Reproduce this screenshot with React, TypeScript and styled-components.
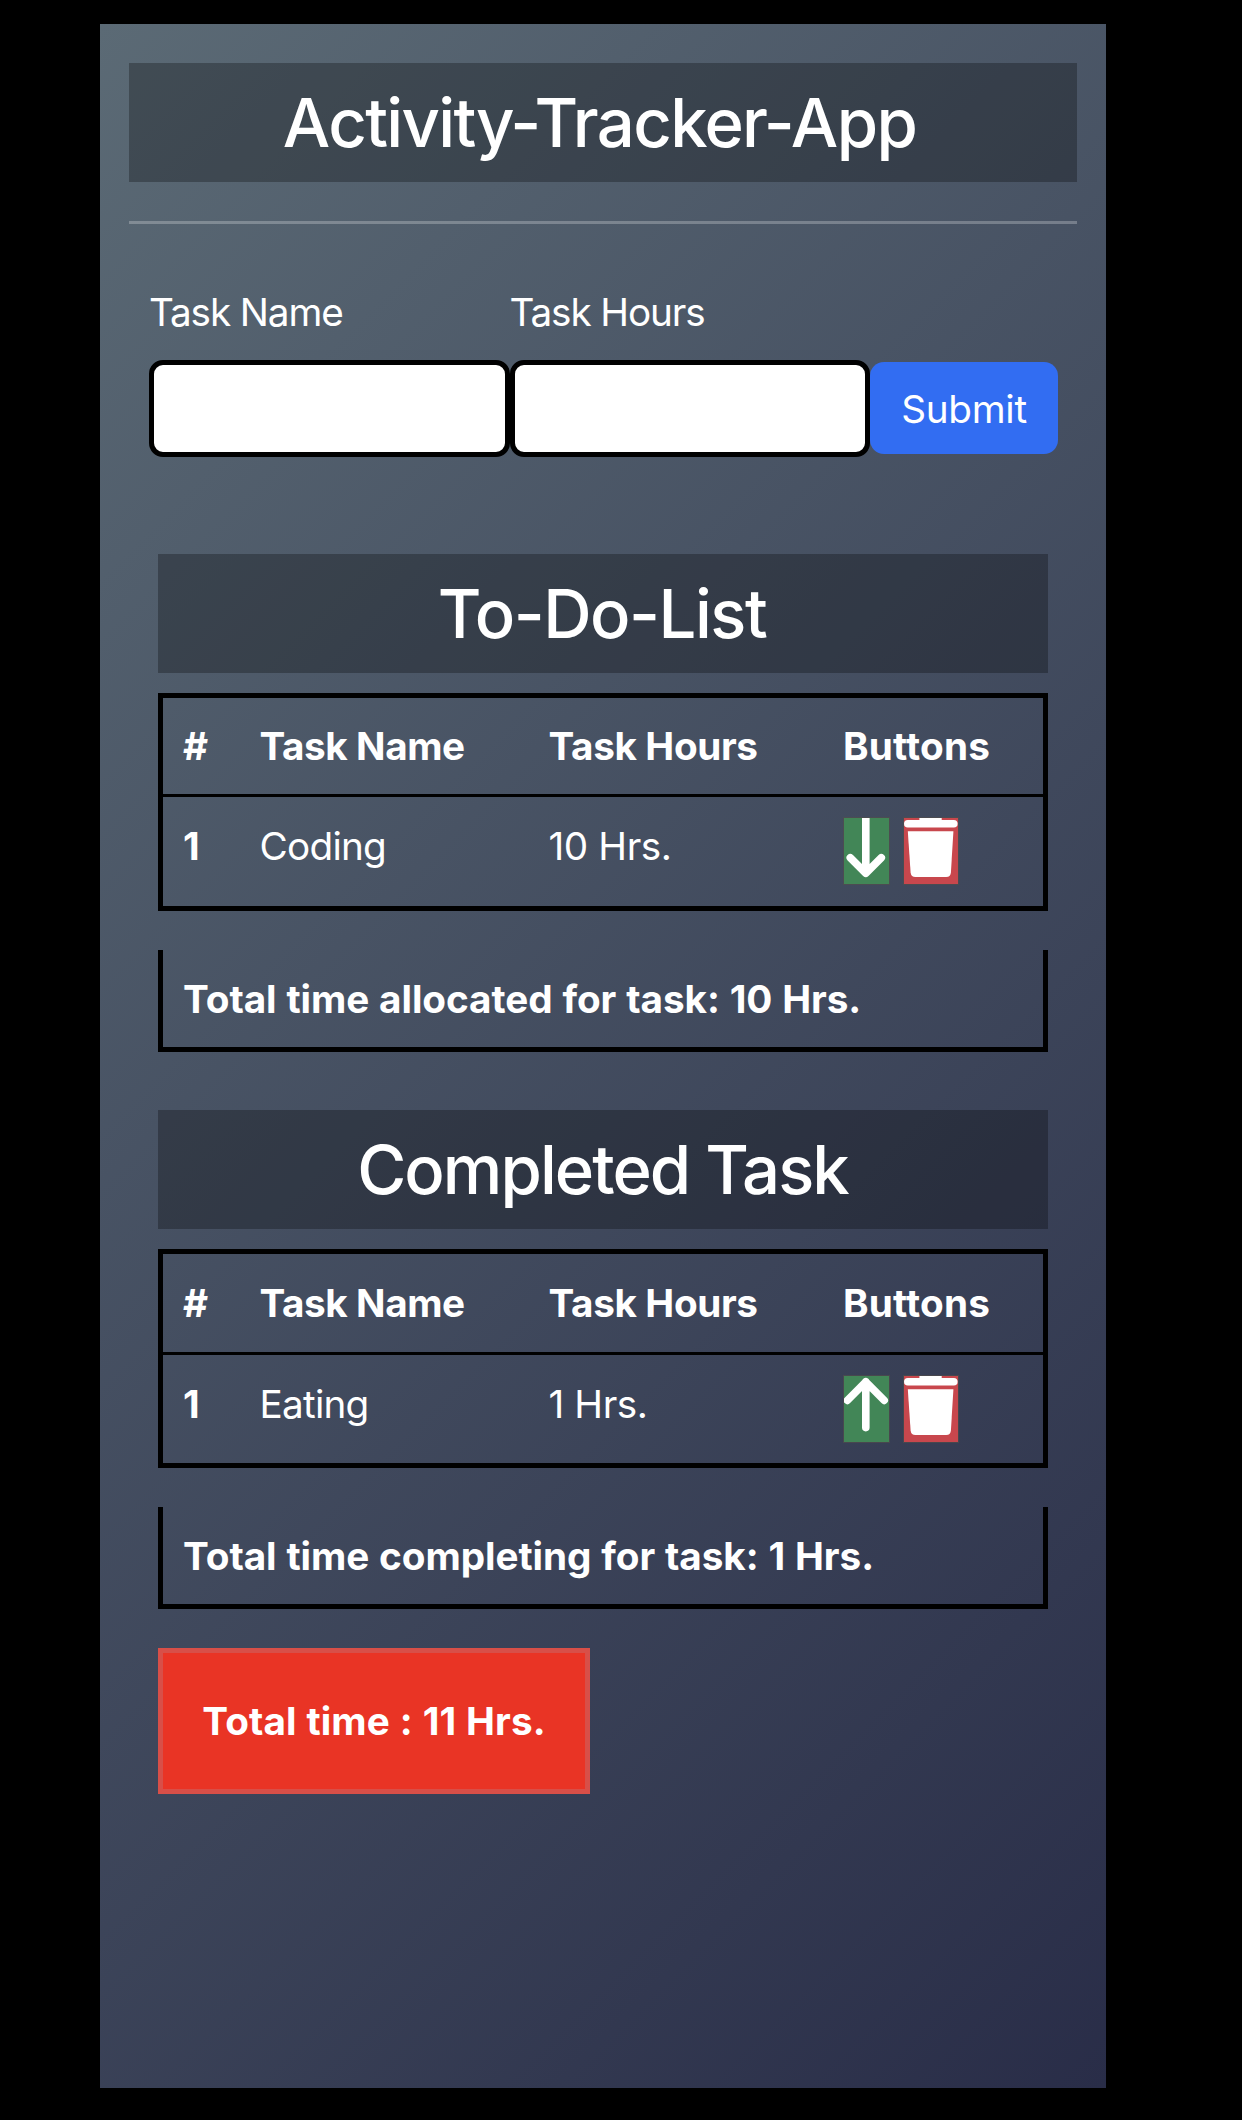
import React from "react";
import styled, { createGlobalStyle } from "styled-components";

const GlobalStyle = createGlobalStyle`
  *, *::before, *::after { box-sizing: border-box; }
  body { margin: 0; background: #000; }
`;

const Screen = styled.div`
  min-height: 2120px;
  padding: 24px 136px 32px 100px;
  background: #000;
  color: #fff;
  font-family: Inter, "Liberation Sans", sans-serif;
  font-size: 38.7px;
  line-height: 59px;
`;

const Panel = styled.main`
  height: 2064px;
  padding: 39px 29px 0;
  background: linear-gradient(135deg, #5b6a75 0%, #292d48 100%);
`;

const Heading = styled.h1<{ $spacing: number; $shift?: number }>`
  margin: 0;
  height: 119px;
  padding: 20px ${(p) => p.$shift ?? 0}px 0 0;
  background: rgba(0, 0, 0, 0.28);
  font-size: 67px;
  font-weight: 500;
  line-height: 79px;
  letter-spacing: ${(p) => p.$spacing}px;
  text-align: center;
  white-space: nowrap;
`;

const Divider = styled.hr`
  height: 3px;
  margin: 39px 0 59px;
  border: 0;
  background: rgba(255, 255, 255, 0.25);
`;

const Form = styled.form`
  display: flex;
  align-items: flex-end;
  margin: 0 19px 97px 20px;
`;

const Field = styled.label`
  display: flex;
  flex-direction: column;
  gap: 18px;
  width: 360.5px;
  letter-spacing: -1.12px;
`;

const Input = styled.input`
  width: 100%;
  height: 97px;
  padding: 0 20px;
  border: 5px solid #000;
  border-radius: 14px;
  background: #fff;
  font: inherit;
`;

const Submit = styled.button`
  width: 188px;
  height: 92px;
  margin-bottom: 3px;
  padding: 2px 0 0;
  border: 0;
  border-radius: 14px;
  background: #326df2;
  color: #fff;
  font: inherit;
  letter-spacing: -0.3px;
`;

const Section = styled.section`
  margin: 0 29px;
`;

const CompletedSection = styled(Section)`
  margin-top: 58px;
`;

const Table = styled.table`
  width: 100%;
  margin-top: 20px;
  border: 5px solid #000;
  border-collapse: separate;
  border-spacing: 0;
  table-layout: fixed;
  text-align: left;
`;

const Col = styled.col<{ $w?: number }>`
  width: ${(p) => (p.$w ? `${p.$w}px` : "auto")};
`;

const HeadCell = styled.th<{ $h: number; $spacing?: number }>`
  height: ${(p) => p.$h}px;
  padding: 1px 20px 0;
  border-bottom: 3px solid #000;
  font-weight: 700;
  letter-spacing: ${(p) => p.$spacing ?? 0}px;
  white-space: nowrap;
`;

const Cell = styled.td<{ $h: number; $spacing?: number }>`
  height: ${(p) => p.$h}px;
  padding: 20px 20px 0;
  letter-spacing: ${(p) => p.$spacing ?? 0}px;
  vertical-align: top;
`;

const RowHead = styled.th<{ $h: number }>`
  height: ${(p) => p.$h}px;
  padding: 20px 20px 0;
  font-weight: 700;
  vertical-align: top;
`;

const Actions = styled.div`
  display: flex;
  gap: 14.5px;
  padding: 1px 0 0 0.5px;
`;

const Total = styled.p`
  height: 102px;
  margin: 39px 0 0;
  padding: 19.5px 20px 0;
  border: 5px solid #000;
  border-top: 0;
  font-weight: 700;
  letter-spacing: -0.06px;
  word-spacing: 0.8px;
`;

const Grand = styled.p`
  display: flex;
  align-items: center;
  justify-content: center;
  width: 432px;
  height: 146px;
  margin: 39px 0 0;
  padding-top: 1px;
  border: 5px solid #d84f48;
  background: #e93425;
  font-weight: 700;
  letter-spacing: 0.1px;
  word-spacing: 0.6px;
`;

const IconButton = styled.button<{ $w: number; $bg: string }>`
  display: block;
  width: ${(p) => p.$w}px;
  height: 66px;
  padding: 0;
  border: 0;
  outline: 1.5px solid rgba(84, 78, 74, 0.6);
  background: ${(p) => p.$bg};
`;

const Glyph = styled.svg`
  display: block;
`;

function Arrow({ up }: { up?: boolean }) {
  return (
    <Glyph width="45.5" height="66" viewBox="0 0 45.5 66" fill="none" stroke="#fff" strokeWidth="7.6" strokeLinecap="round" strokeLinejoin="round">
      {up ? <path d="M21.8 51.6V5.8M3.4 24.4 21.8 5.8 40.2 24.4" /> : <path d="M21.8 -5V55M6.3 39.8 21.8 55.3 37.3 39.8" />}
    </Glyph>
  );
}

function Bin() {
  return (
    <Glyph width="54" height="66" viewBox="0 0 54 66" fill="#fff">
      <path d="M15.4 0h22.3v3H15.4z" />
      <rect x="0" y="2" width="53.6" height="7.6" rx="3.8" />
      <path d="M3.8 13.2H49.4L46.9 54.5Q46.5 59 42.2 59H11.4Q7.1 59 6.6 54.5Z" />
    </Glyph>
  );
}

interface TaskTableProps {
  name: string;
  hours: string;
  up?: boolean;
  headHeight: number;
  rowHeight: number;
}

function TaskTable({ name, hours, up, headHeight, rowHeight }: TaskTableProps) {
  return (
    <Table>
      <colgroup>
        <Col $w={76.5} />
        <Col $w={289} />
        <Col $w={294.5} />
        <Col />
      </colgroup>
      <thead>
        <tr>
          <HeadCell $h={headHeight}>#</HeadCell>
          <HeadCell $h={headHeight} $spacing={-0.42}>Task Name</HeadCell>
          <HeadCell $h={headHeight} $spacing={-0.37}>Task Hours</HeadCell>
          <HeadCell $h={headHeight} $spacing={0.2}>Buttons</HeadCell>
        </tr>
      </thead>
      <tbody>
        <tr>
          <RowHead $h={rowHeight}>1</RowHead>
          <Cell $h={rowHeight} $spacing={-0.75}>{name}</Cell>
          <Cell $h={rowHeight} $spacing={-0.4}>{hours}</Cell>
          <Cell $h={rowHeight}>
            <Actions>
              <IconButton type="button" $w={45.5} $bg="#428657"><Arrow up={up} /></IconButton>
              <IconButton type="button" $w={54} $bg="#c8474d"><Bin /></IconButton>
            </Actions>
          </Cell>
        </tr>
      </tbody>
    </Table>
  );
}

export default function App() {
  return (
    <Screen>
      <GlobalStyle />
      <Panel>
        <Heading $spacing={-1.67} $shift={7}>Activity-Tracker-App</Heading>
        <Divider />
        <Form>
          <Field>Task Name<Input /></Field>
          <Field>Task Hours<Input /></Field>
          <Submit type="button">Submit</Submit>
        </Form>
        <Section>
          <Heading as="h2" $spacing={-1.5} $shift={2}>To-Do-List</Heading>
          <TaskTable name="Coding" hours="10 Hrs." headHeight={99} rowHeight={109} />
          <Total>Total time allocated for task: 10 Hrs.</Total>
        </Section>
        <CompletedSection>
          <Heading as="h2" $spacing={-1.95} $shift={1}>Completed Task</Heading>
          <TaskTable name="Eating" hours="1 Hrs." up headHeight={101} rowHeight={108} />
          <Total>Total time completing for task: 1 Hrs.</Total>
          <Grand>Total time : 11 Hrs.</Grand>
        </CompletedSection>
      </Panel>
    </Screen>
  );
}
